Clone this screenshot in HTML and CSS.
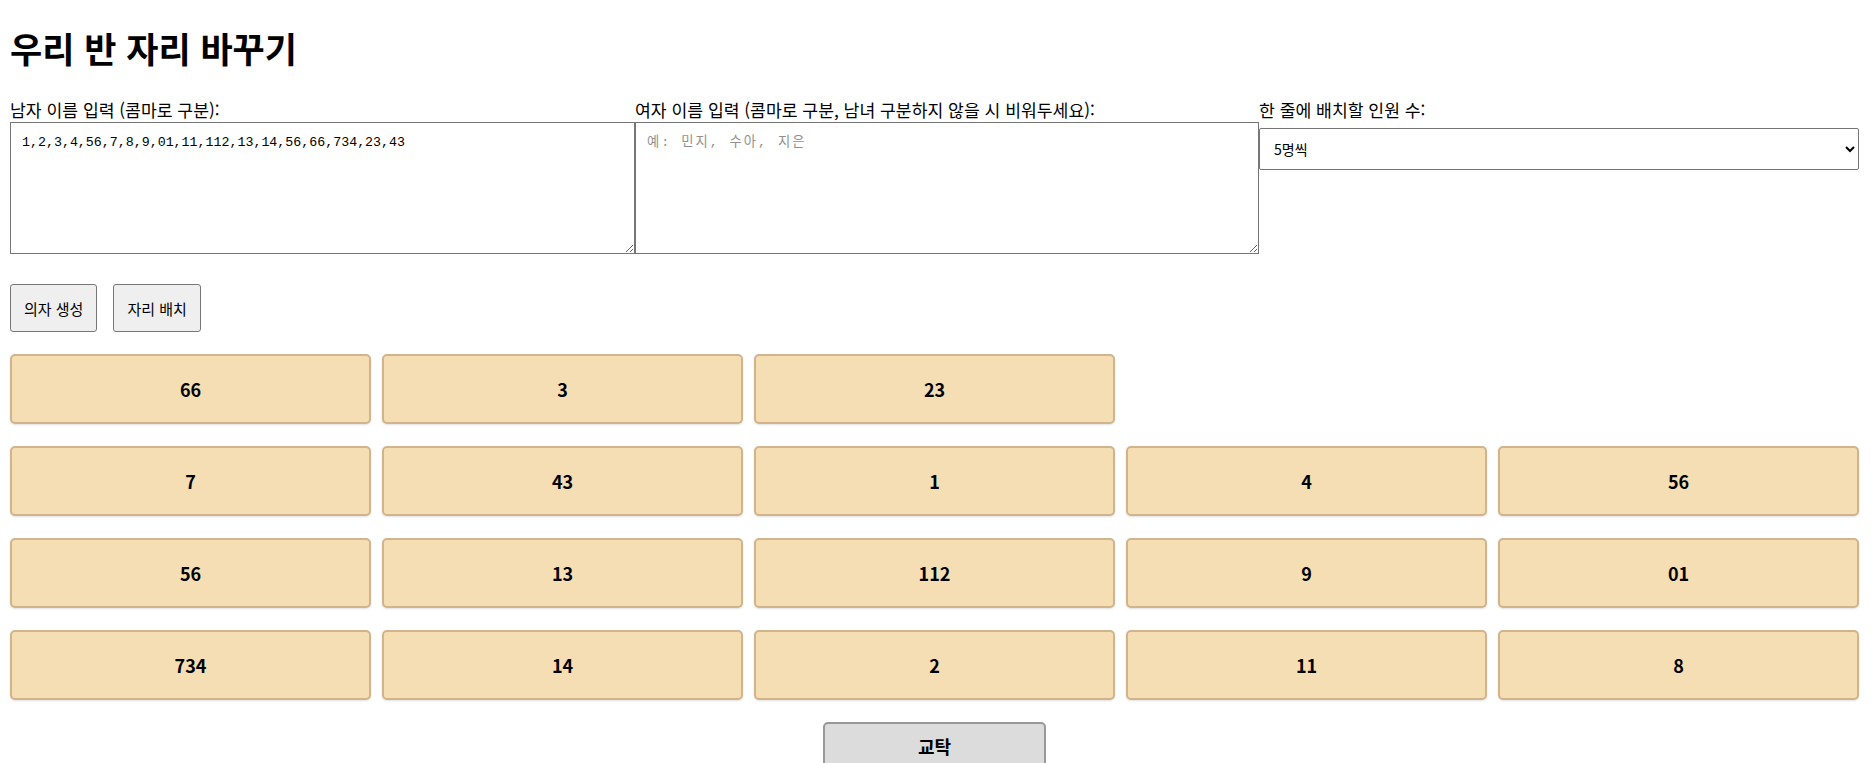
FILE: index.html
```html
<!DOCTYPE html>
<html lang="ko">
<head>
<meta charset="utf-8">
<title>우리 반 자리 바꾸기</title>
<link rel="stylesheet" href="styles.css">
</head>
<body>
<h1 class="title">우리 반 자리 바꾸기</h1>
<div class="inputs">
  <div class="field field-boys">
    <label class="label" for="boys">남자 이름 입력 (콤마로 구분):</label>
    <textarea id="boys" class="names">1,2,3,4,56,7,8,9,01,11,112,13,14,56,66,734,23,43</textarea>
  </div>
  <div class="field field-girls">
    <label class="label" for="girls">여자 이름 입력 (콤마로 구분, 남녀 구분하지 않을 시 비워두세요):</label>
    <textarea id="girls" class="names" placeholder="예: 민지, 수아, 지은"></textarea>
  </div>
  <div class="field field-per-row">
    <label class="label" for="perRow">한 줄에 배치할 인원 수:</label>
    <select id="perRow" class="per-row">
      <option>5명씩</option>
    </select>
  </div>
</div>
<div class="actions">
  <button class="btn">의자 생성</button>
  <button class="btn">자리 배치</button>
</div>
<div class="classroom">
  <div class="seat-row">
    <div class="seat">66</div><div class="seat">3</div><div class="seat">23</div>
  </div>
  <div class="seat-row">
    <div class="seat">7</div><div class="seat">43</div><div class="seat">1</div><div class="seat">4</div><div class="seat">56</div>
  </div>
  <div class="seat-row">
    <div class="seat">56</div><div class="seat">13</div><div class="seat">112</div><div class="seat">9</div><div class="seat">01</div>
  </div>
  <div class="seat-row">
    <div class="seat">734</div><div class="seat">14</div><div class="seat">2</div><div class="seat">11</div><div class="seat">8</div>
  </div>
  <div class="desk-wrap">
    <div class="desk">교탁</div>
  </div>
</div>
</body>
</html>
```
FILE: styles.css
```css
html, body {
  margin: 0;
  background: #fff;
}
body {
  padding: 0 17px 0 10px;
  font-family: "Noto Sans CJK KR", "Noto Sans", sans-serif;
  color: #000;
}
.title {
  font-size: 35px;
  font-weight: 700;
  line-height: 40px;
  margin: 28px 0 32px;
}
.inputs {
  display: flex;
  align-items: flex-start;
}
.field-boys { width: 625px; }
.field-girls { width: 624px; }
.field-per-row { width: 600px; }
.label {
  display: block;
  font-size: 17.2px;
  line-height: 20px;
  margin-bottom: 2px;
  white-space: nowrap;
}
.names {
  display: block;
  box-sizing: border-box;
  width: 100%;
  height: 132px;
  margin: 0;
  padding: 11px 11px;
  border: 1px solid #767676;
  font-family: "Liberation Mono", "Noto Sans CJK KR", monospace;
  font-size: 13.3px;
  line-height: 18px;
  color: #000;
}
.names::placeholder {
  color: #909090;
  letter-spacing: 2px;
}
.per-row {
  display: block;
  box-sizing: border-box;
  width: 100%;
  height: 42px;
  margin-top: 8px;
  padding: 0 10px;
  border: 1px solid #767676;
  border-radius: 2px;
  background: #fff;
  font-family: "Noto Sans CJK KR", sans-serif;
  font-size: 14px;
  color: #000;
}
.actions {
  display: flex;
  gap: 16px;
  margin-top: 30px;
}
.btn {
  box-sizing: border-box;
  height: 48px;
  padding: 0 13px;
  background: #efefef;
  border: 1px solid #767676;
  border-radius: 3px;
  font-family: "Noto Sans CJK KR", sans-serif;
  font-size: 15px;
  color: #000;
}
.classroom {
  margin-top: 22px;
  display: flex;
  flex-direction: column;
  gap: 22px;
}
.seat-row {
  display: grid;
  grid-template-columns: repeat(5, 361px);
  column-gap: 11px;
}
.seat {
  box-sizing: border-box;
  height: 70px;
  display: flex;
  align-items: center;
  justify-content: center;
  background: #f5deb3;
  border: 2px solid #d2b48c;
  border-radius: 5px;
  box-shadow: 0 1px 2px rgba(0,0,0,0.12);
  font-size: 18px;
  font-weight: 700;
}
.desk-wrap {
  display: flex;
  justify-content: center;
  padding-bottom: 10px;
}
.desk {
  box-sizing: border-box;
  width: 223px;
  height: 48px;
  display: flex;
  align-items: center;
  justify-content: center;
  background: #dcdcdc;
  border: 2px solid #999;
  border-radius: 5px;
  font-size: 18px;
  font-weight: 700;
}
```
